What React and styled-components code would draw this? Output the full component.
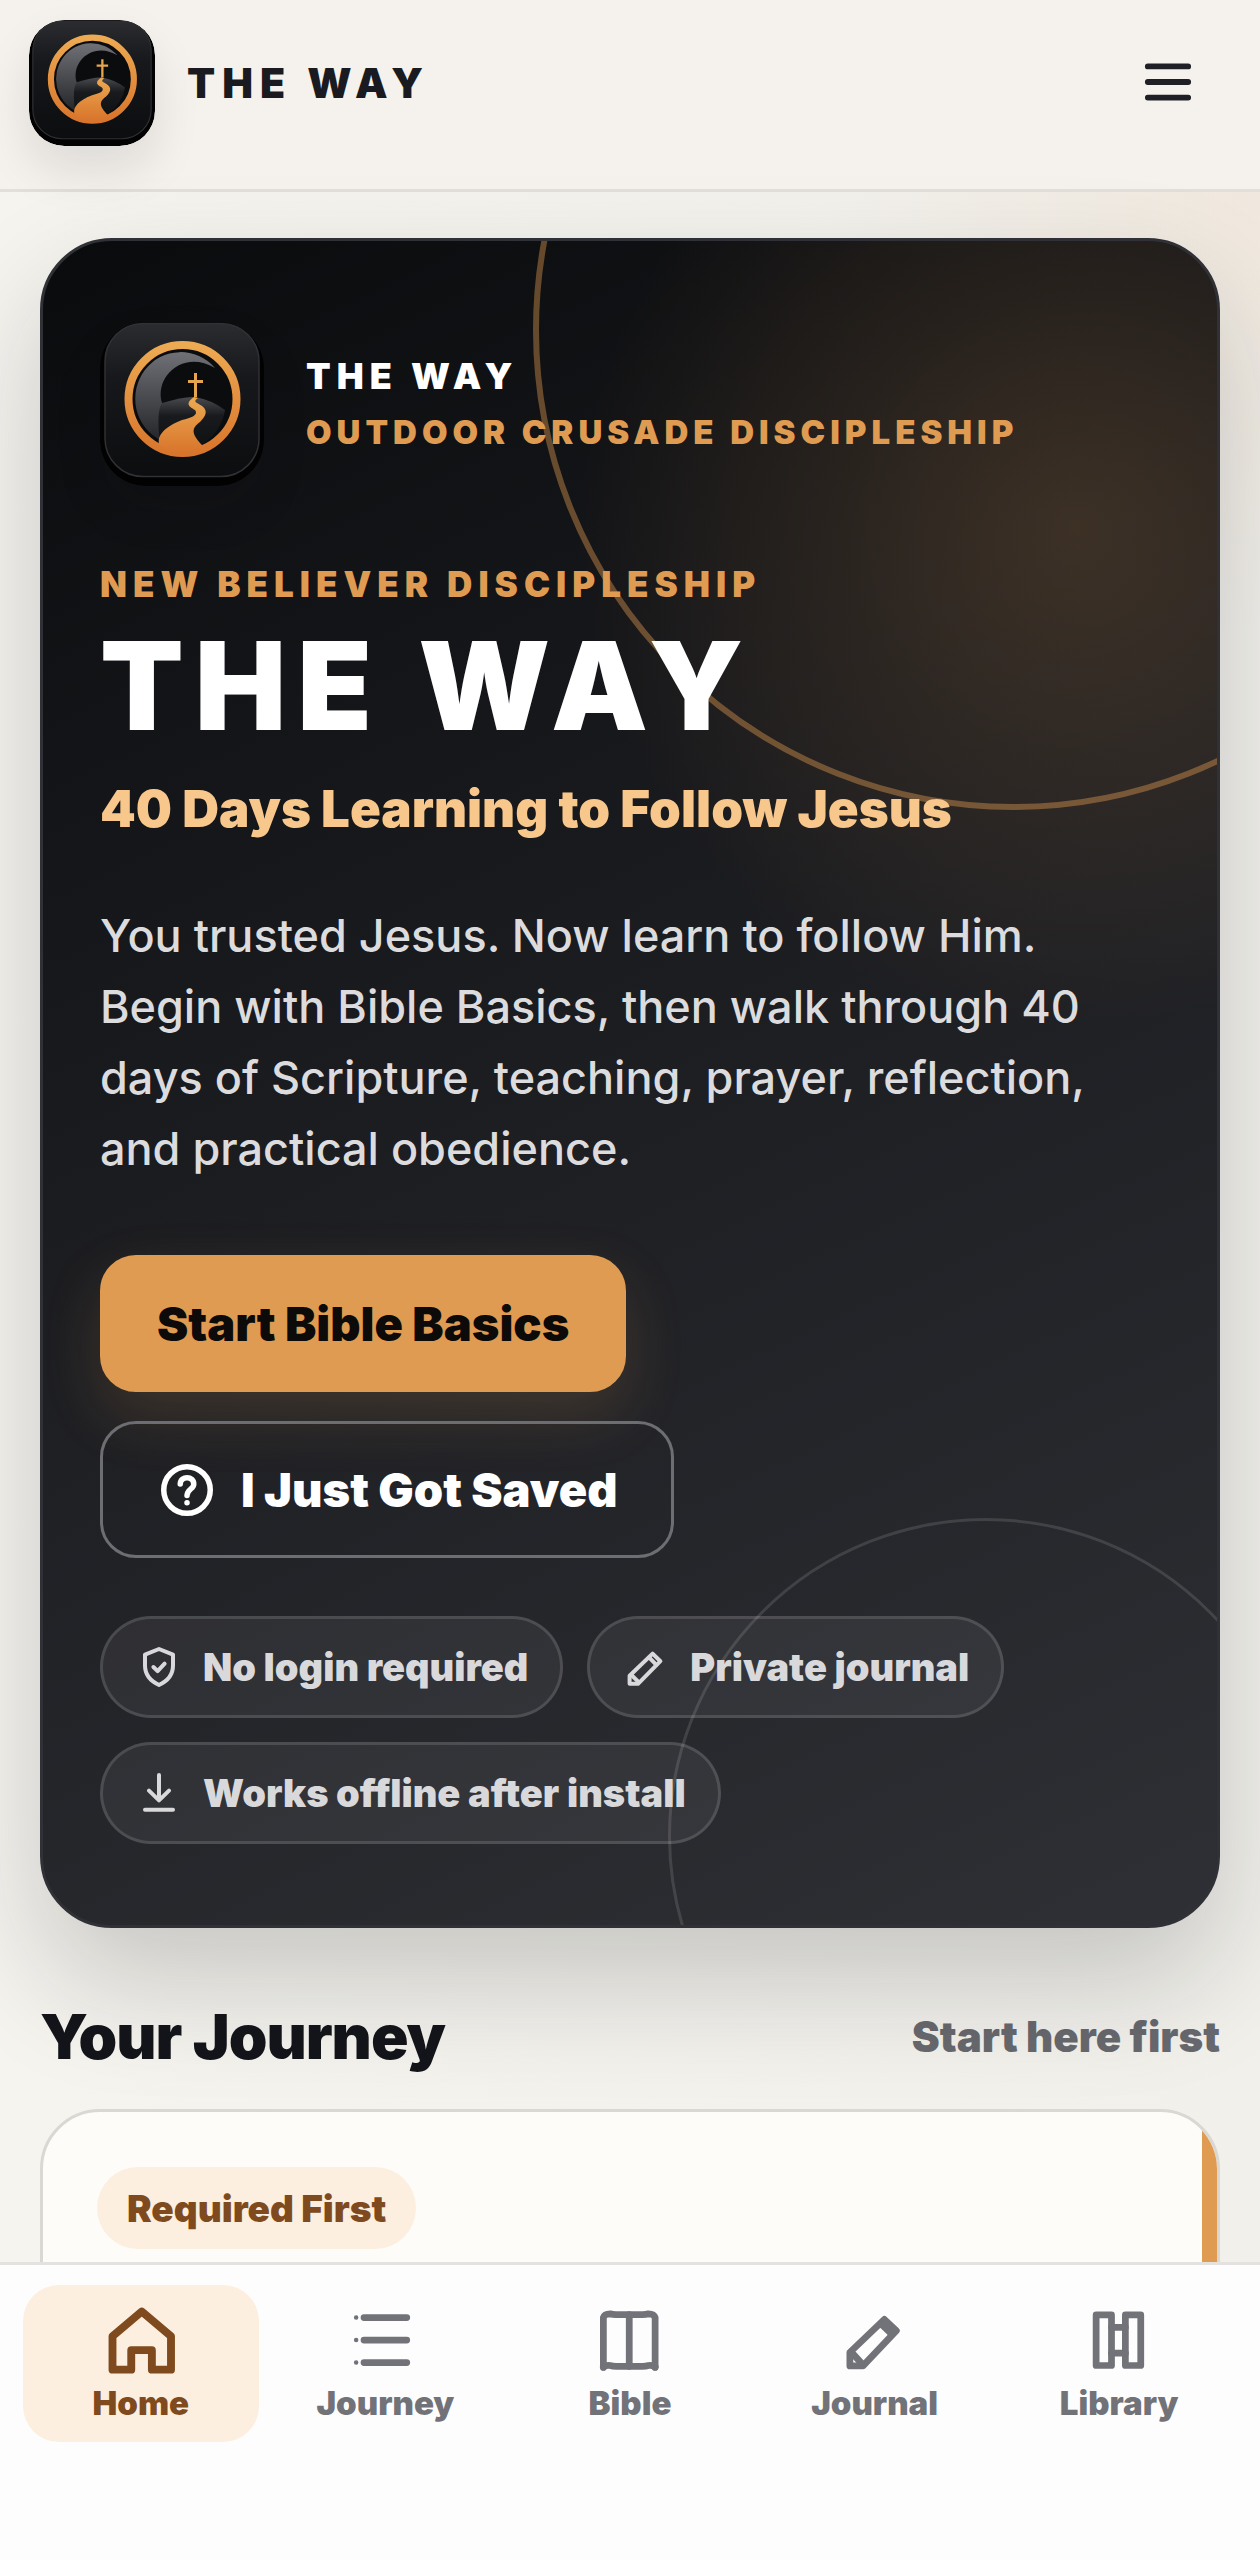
import React from "react";
import styled, { createGlobalStyle, css } from "styled-components";

const GlobalStyle = createGlobalStyle`
  *,
  *::before,
  *::after {
    box-sizing: border-box;
  }

  body {
    margin: 0;
    background: #f3f1eb;
    color: #14151a;
    font-family: Inter, "Liberation Sans", sans-serif;
    -webkit-font-smoothing: antialiased;
  }

  h1, h2, p, ul {
    margin: 0;
    padding: 0;
  }
`;

const tabs = [
  { label: "Home", icon: "home", active: true },
  { label: "Journey", icon: "list" },
  { label: "Bible", icon: "book" },
  { label: "Journal", icon: "pencil" },
  { label: "Library", icon: "library" },
];

const perks = [
  { label: "No login required", icon: "shield" },
  { label: "Private journal", icon: "pen" },
  { label: "Works offline after install", icon: "download" },
];

const shapes = {
  menu: <path d="M5.800 7.200h12.400M5.800 12h12.400M5.800 16.800h12.400" />,
  home: <path d="M12.200 4.400 4.400 11v8.900h5v-5.200h5.500v5.200H20V11z" />,
  list: (
    <>
      <path d="M6.400 6h11.400M6.400 12h11.400M6.400 18h11.400" />
      <path d="M4.300 6h.01M4.300 12h.01M4.300 18h.01" strokeWidth="1.200" />
    </>
  ),
  book: (
    <>
      <path d="M11.800 5.200V19" />
      <path d="M4.900 19.300V6q.3-1 1.800-1 .6.200 1.600.2h7q1 0 1.600-.2 1.500 0 1.800 1v13.300" />
      <path d="M4.900 19.200q.8-.6 1.800-.4.600.2 1.600.2h7q1 0 1.600-.2 1-.2 1.800.4" />
    </>
  ),
  pencil: (
    <>
      <path d="M5.300 18.900v-3.600l9.200-8.800 3.200 3-8.900 9.400z" />
      <path d="m13.800 7.900 2.300 2.200M6.300 15.900l2 2.200" />
    </>
  ),
  pen: (
    <>
      <path d="M3.800 20.400v-4L15.300 5.300l3.900 3.800L8 20.400z" />
      <path d="m13.500 7.200 3.700 3.700M4.800 16.100l3.700 3.600" />
    </>
  ),
  library: (
    <>
      <path d="M5.900 5.300h4.100v13.500H5.900zM13.700 5.300h4.100v13.500h-4.100z" />
      <path d="M10 8.600h3.700M10 15.500h3.700" />
    </>
  ),
  help: (
    <>
      <circle cx="12" cy="12" r="9.300" />
      <path d="M9.300 9.600c.1-3.400 5.500-3.300 5.400.1 0 1.900-2.700 2-2.700 4.500M12 17.100h.01" />
    </>
  ),
  shield: (
    <>
      <path d="M12 3 5 5.800v5.500c0 4.500 2.800 7.800 7 9.700 4.200-1.900 7-5.200 7-9.700V5.800z" />
      <path d="m9.200 12 2.100 2.100 3.500-3.800" />
    </>
  ),
  download: <path d="M12 3v12.500M7 10.800l5 4.900 5-4.900M5 20.400h14" />,
};

const Icon = ({ name, size, weight = 2 }) => (
  <svg
    width={size}
    height={size}
    viewBox="0 0 24 24"
    fill="none"
    stroke="currentColor"
    strokeWidth={weight}
    strokeLinecap="round"
    strokeLinejoin="round"
    aria-hidden="true"
  >
    {shapes[name]}
  </svg>
);

const Logo = ({ id, size }) => (
  <LogoArt width={size} height={size} viewBox="0 0 164 164" aria-hidden="true">
    <defs>
      <linearGradient id={`${id}-tile`} x1="0" y1="0" x2="0" y2="1">
        <stop offset="0" stopColor="#2b2c30" />
        <stop offset=".35" stopColor="#17181b" />
        <stop offset="1" stopColor="#0c0d0f" />
      </linearGradient>
      <linearGradient id={`${id}-gold`} x1="0" y1="0" x2="0" y2="1">
        <stop offset="0" stopColor="#edaa52" />
        <stop offset="1" stopColor="#d8752c" />
      </linearGradient>
      <linearGradient id={`${id}-moon`} x1="0" y1="0" x2="0" y2="1">
        <stop offset="0" stopColor="#707176" />
        <stop offset="1" stopColor="#25262a" />
      </linearGradient>
      <linearGradient id={`${id}-hill`} x1="0" y1="0" x2="0" y2="1">
        <stop offset="0" stopColor="#4a4b50" />
        <stop offset=".4" stopColor="#191a1d" />
        <stop offset="1" stopColor="#101113" />
      </linearGradient>
    </defs>
    <rect width="164" height="164" rx="46" fill="#020203" />
    <rect x="5" y="1.500" width="154" height="153" rx="38" fill={`url(#${id}-tile)`} stroke="#303135" strokeWidth="1.500" />
    <circle cx="82.500" cy="77" r="54" fill="#0b0c0e" stroke={`url(#${id}-gold)`} strokeWidth="8" />
    <path
      d="M115 46A45.500 46.500 0 1 0 60 118L88 86 62 81C54 54 84 27 115 46Z"
      fill={`url(#${id}-moon)`}
    />
    <path d="M62 81Q85 74 95 75 112 78 125 88 122 108 103 122L60 120Q56 90 62 81Z" fill={`url(#${id}-hill)`} />
    <path
      d="M94 75C84 82 90 85 95 88 99 93 91 96 82 98 66 104 55 114 60 124Q82 136 103 124C90 111 92 106 100 100 109 91 107 86 97 81Q93 79 98 76Z"
      fill={`url(#${id}-gold)`}
    />
    <path d="M95.500 51v24M88 59.500h15" stroke="#e6a44e" strokeWidth="3" />
  </LogoArt>
);

const App = () => {
  return (
    <Page>
      <GlobalStyle />
      <Header>
        <Brand href="#home">
          <Logo id="brand" size={126} />
          <BrandName>THE WAY</BrandName>
        </Brand>
        <MenuButton type="button" aria-label="Open menu">
          <Icon name="menu" size={78} weight={1.8} />
        </MenuButton>
      </Header>

      <Main>
        <Hero>
          <Lockup>
            <Logo id="hero" size={164} />
            <div>
              <LockupName>THE WAY</LockupName>
              <LockupTag>OUTDOOR CRUSADE DISCIPLESHIP</LockupTag>
            </div>
          </Lockup>

          <Eyebrow>NEW BELIEVER DISCIPLESHIP</Eyebrow>
          <HeroTitle>THE WAY</HeroTitle>
          <HeroSubtitle>40 Days Learning to Follow Jesus</HeroSubtitle>
          <HeroText>
            You trusted Jesus. Now learn to follow Him. Begin with Bible Basics,
            then walk through 40 days of Scripture, teaching, prayer,
            reflection, and practical obedience.
          </HeroText>

          <Actions>
            <ActionButton type="button" $primary>
              Start Bible Basics
            </ActionButton>
            <ActionButton type="button">
              <Icon name="help" size={60} weight={2.2} />
              I Just Got Saved
            </ActionButton>
          </Actions>

          <Perks>
            {perks.map((perk) => (
              <Perk key={perk.label}>
                <Icon name={perk.icon} size={48} />
                {perk.label}
              </Perk>
            ))}
          </Perks>
        </Hero>

        <SectionHead>
          <SectionTitle>Your Journey</SectionTitle>
          <SectionNote>Start here first</SectionNote>
        </SectionHead>

        <JourneyCard>
          <Badge>Required First</Badge>
        </JourneyCard>
      </Main>

      <TabBar aria-label="Main">
        {tabs.map((tab) => (
          <Tab
            key={tab.label}
            href={`#${tab.label.toLowerCase()}`}
            $active={tab.active}
            aria-current={tab.active ? "page" : undefined}
          >
            <Icon name={tab.icon} size={90} weight={tab.active ? 2.1 : 1.8} />
            {tab.label}
          </Tab>
        ))}
      </TabBar>
    </Page>
  );
};

export default App;

const Page = styled.div`
  min-height: 100vh;
  overflow: hidden;
  background:
    radial-gradient(circle at 100% 200px, rgba(233, 150, 90, 0.09), transparent 440px),
    linear-gradient(90deg, #f6f4ef, #f1f0eb);
`;

const Header = styled.header`
  display: flex;
  align-items: flex-start;
  justify-content: space-between;
  height: 192px;
  padding: 20px 53px 0 29px;
  background: #f5f2ed;
  border-bottom: 3px solid #e2dfda;
`;

const LogoArt = styled.svg`
  display: block;
  flex: none;
  border-radius: 28%;
  box-shadow: 0 24px 48px rgba(20, 21, 26, 0.1);
`;

const Brand = styled.a`
  display: flex;
  align-items: center;
  gap: 32px;
  color: #1a1b20;
  text-decoration: none;
`;

const BrandName = styled.span`
  font-size: 41px;
  font-weight: 900;
  line-height: 48px;
  letter-spacing: 7px;
`;

const MenuButton = styled.button`
  display: grid;
  place-items: center;
  width: 78px;
  height: 124px;
  padding: 0;
  border: 0;
  background: none;
  color: #1f2025;
`;

const Main = styled.main`
  padding: 46px 40px 0;
`;

const Hero = styled.section`
  position: relative;
  isolation: isolate;
  overflow: hidden;
  padding: 81px 57px;
  border: 3px solid #303136;
  border-radius: 72px;
  background:
    radial-gradient(circle at 88% 17%, rgba(223, 155, 82, 0.19), transparent 500px),
    linear-gradient(155deg, #0a0b0d, #1e1f23 52%, #2f3035);
  box-shadow: 0 54px 120px rgba(20, 21, 26, 0.2);

  &::before,
  &::after {
    content: "";
    position: absolute;
    z-index: -1;
    border-radius: 50%;
    pointer-events: none;
  }

  &::before {
    top: -391px;
    right: -276px;
    width: 960px;
    height: 960px;
    border: 6px solid rgba(223, 155, 82, 0.42);
  }

  &::after {
    right: -87px;
    bottom: -229px;
    width: 636px;
    height: 636px;
    border: 3px solid rgba(255, 255, 255, 0.12);
  }
`;

const Lockup = styled.div`
  display: flex;
  align-items: center;
  gap: 42px;
  margin-bottom: 78px;
`;

const spacedCaps = css`
  font-weight: 900;
  line-height: 40px;
`;

const LockupName = styled.p`
  ${spacedCaps}
  margin-bottom: 16px;
  color: #ffffff;
  font-size: 36px;
  letter-spacing: 6px;
`;

const LockupTag = styled.p`
  ${spacedCaps}
  color: #df9b52;
  font-size: 33px;
  letter-spacing: 5px;
`;

const Eyebrow = styled.p`
  ${spacedCaps}
  color: #df9b52;
  font-size: 35px;
  letter-spacing: 6px;
`;

const HeroTitle = styled.h1`
  margin-top: 21px;
  color: #ffffff;
  font-size: 122px;
  font-weight: 900;
  line-height: 121px;
  letter-spacing: 11px;
`;

const HeroSubtitle = styled.p`
  margin-top: 33px;
  color: #f7c78b;
  font-size: 51px;
  font-weight: 900;
  line-height: 60px;
`;

const HeroText = styled.p`
  max-width: 1020px;
  margin-top: 61px;
  color: #dcdcde;
  font-size: 45px;
  font-weight: 500;
  line-height: 71px;
`;

const Actions = styled.div`
  display: flex;
  flex-wrap: wrap;
  gap: 29px;
  max-width: 900px;
  margin-top: 71px;
`;

const ActionButton = styled.button`
  display: inline-flex;
  align-items: center;
  gap: 24px;
  height: 137px;
  padding: 0 54px;
  border: 3px solid #6d6e72;
  border-radius: 36px;
  background: transparent;
  color: #ffffff;
  font-family: inherit;
  font-size: 47px;
  font-weight: 900;

  ${(props) =>
    props.$primary &&
    css`
      border-color: #df9b52;
      background: #df9b52;
      color: #0c0b0a;
      box-shadow: 0 24px 60px rgba(223, 155, 82, 0.16);
    `}
`;

const Perks = styled.ul`
  display: flex;
  flex-wrap: wrap;
  gap: 24px;
  margin-top: 58px;
  list-style: none;
`;

const Perk = styled.li`
  display: flex;
  align-items: center;
  gap: 20px;
  height: 102px;
  padding: 0 32px;
  border: 3px solid rgba(255, 255, 255, 0.13);
  border-radius: 51px;
  background: rgba(255, 255, 255, 0.06);
  color: #d9d9dc;
  font-size: 38px;
  font-weight: 900;
`;

const SectionHead = styled.div`
  display: flex;
  align-items: center;
  justify-content: space-between;
  margin: 73px 0 36px;
`;

const SectionTitle = styled.h2`
  font-size: 62px;
  font-weight: 900;
  line-height: 72px;
  letter-spacing: -1px;
`;

const SectionNote = styled.p`
  color: #68696e;
  font-size: 42px;
  font-weight: 900;
  line-height: 48px;
`;

const JourneyCard = styled.section`
  position: relative;
  overflow: hidden;
  min-height: 480px;
  padding: 55px 54px;
  border: 3px solid #dad8d3;
  border-radius: 60px;
  background: #fefcf8;

  &::after {
    content: "";
    position: absolute;
    top: 0;
    right: 0;
    bottom: 0;
    width: 15px;
    background: #df9b52;
  }
`;

const Badge = styled.span`
  display: inline-flex;
  align-items: center;
  height: 82px;
  padding: 0 30px;
  border-radius: 41px;
  background: #fcefdf;
  color: #7f4b1e;
  font-size: 37px;
  font-weight: 900;
`;

/* stays over the page while the journey list scrolls under it */
const TabBar = styled.nav`
  position: fixed;
  right: 0;
  bottom: 0;
  left: 0;
  display: grid;
  grid-template-columns: repeat(5, 1fr);
  gap: 9px;
  padding: 20px 23px 118px;
  border-top: 3px solid #e3e2e1;
  background: #fefdfd;
`;

const Tab = styled.a`
  display: flex;
  flex-direction: column;
  align-items: center;
  height: 157px;
  padding-top: 10px;
  border-radius: 36px;
  background: ${(props) => (props.$active ? "#fcefdf" : "transparent")};
  color: ${(props) => (props.$active ? "#7f4b1e" : "#727378")};
  font-size: 33px;
  font-weight: 900;
  line-height: 36px;
  text-decoration: none;
`;
